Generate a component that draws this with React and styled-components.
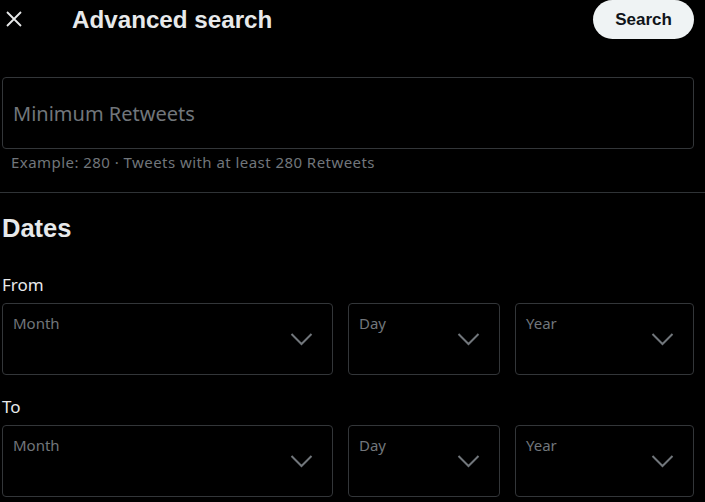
import React from "react";
import styled, { createGlobalStyle } from "styled-components";

const Global = createGlobalStyle`
  html, body {
    margin: 0;
    padding: 0;
    background: #000;
  }
  body {
    font-family: "Noto Sans", "Liberation Sans", Arial, sans-serif;
    color: #e7e9ea;
  }
`;

const Page = styled.div`
  width: 705px;
  height: 502px;
  overflow: hidden;
  background: #000;
`;

const Header = styled.header`
  height: 39px;
  display: flex;
  align-items: center;
  padding: 0 11px 0 6px;
`;

const CloseButton = styled.button`
  width: 16px;
  height: 16px;
  padding: 0;
  margin-top: -2px;
  border: 0;
  background: none;
  color: #e7e9ea;
  display: flex;
  cursor: pointer;
`;

const Title = styled.h2`
  flex: 1;
  margin: 0 0 0 50px;
  font-family: "Liberation Sans", Arial, sans-serif;
  font-size: 24.2px;
  font-weight: 700;
  color: #e7e9ea;
`;

const SearchButton = styled.button`
  height: 39px;
  width: 101px;
  padding: 0;
  border: 0;
  border-radius: 20px;
  background: #eff3f4;
  color: #0f1419;
  font-family: "Liberation Sans", Arial, sans-serif;
  font-size: 17px;
  font-weight: 700;
  cursor: pointer;
`;

const Section = styled.section`
  padding: 0 11px 0 2px;
`;

const InputBox = styled.div`
  margin-top: 38px;
  height: 70px;
  border: 1px solid #333639;
  border-radius: 4px;
  display: flex;
  align-items: center;
  padding: 0 10px;
  font-size: 20px;
  color: #71767b;
`;

const Hint = styled.div`
  margin: 3px 0 0 9px;
  font-size: 15px;
  letter-spacing: 0.45px;
  color: #71767b;
`;

const Divider = styled.hr`
  margin: 20px 0 0;
  border: 0;
  border-top: 1px solid #2f3336;
`;

const Heading = styled.h3`
  margin: 20px 0 0;
  font-family: "Liberation Sans", Arial, sans-serif;
  font-size: 25.5px;
  font-weight: 700;
  color: #e7e9ea;
  line-height: 30px;
`;

const Label = styled.div`
  margin-top: ${(p) => p.$top}px;
  font-size: 17px;
  line-height: 22px;
  color: #e7e9ea;
`;

const SelectRow = styled.div`
  margin-top: 7px;
  display: grid;
  grid-template-columns: 331fr 152fr 179fr;
  gap: 15px;
`;

const SelectBox = styled.div`
  border: 1px solid #333639;
  border-radius: 4px;
  position: relative;
  padding: 9px 10px 0;
  box-sizing: border-box;
  height: 72px;
`;

const SelectLabel = styled.div`
  font-size: 15px;
  line-height: 20px;
  color: #71767b;
`;

const Chevron = styled.svg`
  position: absolute;
  right: 19px;
  top: 28px;
  width: 23px;
  height: 14px;
`;

const XIcon = () => (
  <svg width="16" height="16" viewBox="0 0 16 16">
    <path d="M1 1 L15 15 M15 1 L1 15" stroke="currentColor" strokeWidth="1.8" fill="none" />
  </svg>
);

const Select = ({ label }) => (
  <SelectBox>
    <SelectLabel>{label}</SelectLabel>
    <Chevron viewBox="0 0 23 14">
      <path d="M1.5 2 L11.5 12 L21.5 2" stroke="#71767b" strokeWidth="2" fill="none" />
    </Chevron>
  </SelectBox>
);

const DateRow = () => (
  <SelectRow>
    <Select label="Month" />
    <Select label="Day" />
    <Select label="Year" />
  </SelectRow>
);

export default function App() {
  return (
    <Page>
      <Global />
      <Header>
        <CloseButton aria-label="Close">
          <XIcon />
        </CloseButton>
        <Title>Advanced search</Title>
        <SearchButton>Search</SearchButton>
      </Header>
      <Section>
        <InputBox>Minimum Retweets</InputBox>
        <Hint>Example: 280 · Tweets with at least 280 Retweets</Hint>
      </Section>
      <Divider />
      <Section>
        <Heading>Dates</Heading>
        <Label $top={31}>From</Label>
        <DateRow />
        <Label $top={21}>To</Label>
        <DateRow />
      </Section>
    </Page>
  );
}
